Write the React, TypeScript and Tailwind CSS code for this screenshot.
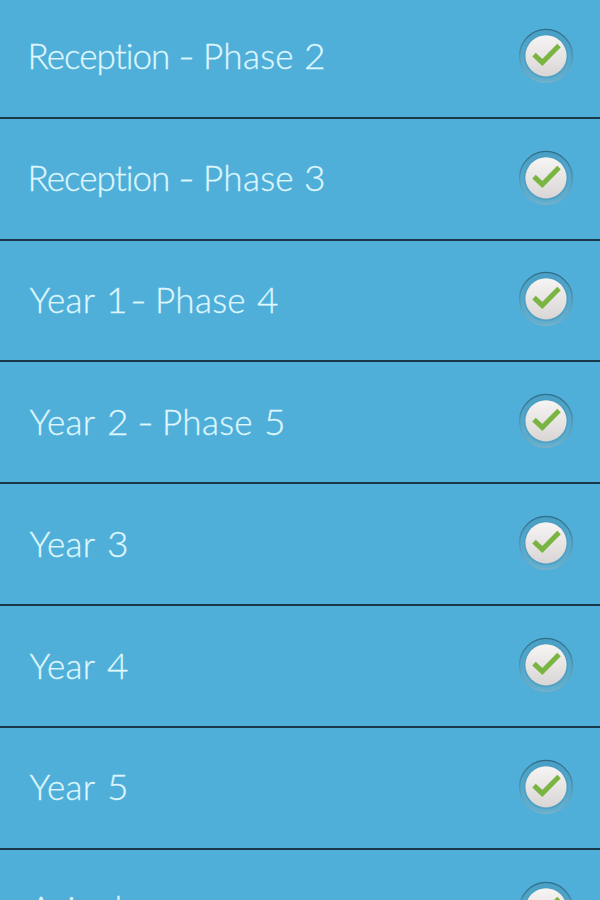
type Word = { text: string; cls: string };

const reception: Word = { text: "Reception", cls: "w-[152px] pl-[1.5px] tracking-[-0.95px]" };
const year: Word = { text: "Year", cls: "w-[80px] pl-[3.5px] tracking-[0.3px]" };
const phase: Word = { text: "Phase", cls: "w-[101px] tracking-[0.3px]" };
const dash: Word = { text: "-", cls: "w-[25px] origin-left scale-x-130" };
const digit = (text: string, cls = "w-[31px]"): Word => ({
  text,
  cls: cls + " origin-left scale-x-106 pl-[1px]",
});

const rows: Word[][] = [
  [reception, dash, phase, digit("2", "w-[31px] -ml-[1px]")],
  [reception, dash, phase, digit("3", "w-[31px] -ml-[1px]")],
  [year, digit("1", "w-[24px] -ml-[1px] mr-px"), dash, phase, digit("4")],
  [year, digit("2"), dash, phase, digit("5")],
  [year, digit("3")],
  [year, digit("4")],
  [year, digit("5")],
  [{ text: "Animal", cls: "pl-[3.5px] tracking-[-2px]" }],
];

function Check() {
  return (
    <svg className="h-14 w-14 shrink-0" viewBox="0 0 56 56">
      <defs>
        <linearGradient id="disc" x1="0" y1="0" x2="0" y2="1">
          <stop offset="0" stopColor="#f7f5f4" />
          <stop offset="1" stopColor="#d9d5d5" />
        </linearGradient>
        <linearGradient id="ring" x1="0" y1="0" x2="0" y2="1">
          <stop offset="0" stopColor="#2f6c88" />
          <stop offset="0.5" stopColor="#4b97b5" />
          <stop offset="1" stopColor="#7ab0c6" />
        </linearGradient>
        <linearGradient id="well" x1="0" y1="0" x2="0" y2="1">
          <stop offset="0" stopColor="#489fc5" />
          <stop offset="1" stopColor="#62b0d0" />
        </linearGradient>
      </defs>
      <circle cx="28" cy="27.8" r="26.4" fill="url(#well)" stroke="url(#ring)" strokeWidth="1.4" />
      <circle cx="28" cy="28.4" r="22" fill="#3f8fb2" opacity="0.4" />
      <circle cx="28" cy="27.8" r="20.6" fill="url(#disc)" />
      <path d="M16 26.6l8.3 7.8L41 17.6" fill="none" stroke="#7ab542" strokeWidth="5" />
    </svg>
  );
}

export default function App() {
  return (
    <ul className="h-[900px] w-[600px] overflow-hidden bg-[#4fafd9] font-['Lato',sans-serif] text-[35px] font-light text-[#e1f8ff] [-webkit-text-stroke:0.3px_#d5f3fc] [font-variant-ligatures:none]">
      {rows.map((row, i) => (
        <li
          key={i}
          className={
            (i === 0 ? "h-[118.7px]" : "h-[121.88px]") +
            " flex items-end justify-between border-b-2 border-[#1b3848] pr-[26px] pb-[33px] pl-[26px]"
          }
        >
          <span className="flex h-14 items-center leading-none">
            {row.map((word, j) => (
              <span key={j} className={"block shrink-0 " + word.cls}>
                {word.text}
              </span>
            ))}
          </span>
          <Check />
        </li>
      ))}
    </ul>
  );
}
